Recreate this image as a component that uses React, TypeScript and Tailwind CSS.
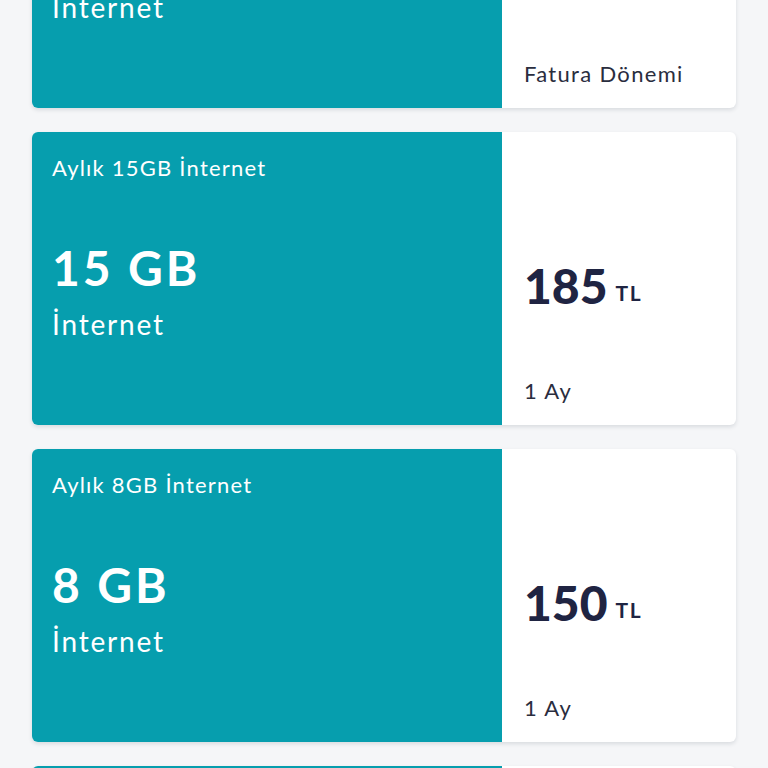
// Internet paketleri — package list cards

interface Pack {
  id: string;
  title: string;
  amount: string;
  price: string;
  period: string;
}

const packs: Pack[] = [
  { id: 'p20', title: 'Aylık 20GB İnternet', amount: '20 GB', price: '210', period: 'Fatura Dönemi' },
  { id: 'p15', title: 'Aylık 15GB İnternet', amount: '15 GB', price: '185', period: '1 Ay' },
  { id: 'p8', title: 'Aylık 8GB İnternet', amount: '8 GB', price: '150', period: '1 Ay' },
  { id: 'p4', title: 'Aylık 4GB İnternet', amount: '4 GB', price: '110', period: '1 Ay' },
];

function PackCard({ pack }: { pack: Pack }) {
  return (
    <div className="flex h-[293px] overflow-hidden rounded-md bg-white shadow-[0_2px_4px_rgba(20,30,50,0.12)]">
      {/* Left: package info */}
      <div className="flex w-[470px] flex-col bg-[#069eae] pl-5 text-white">
        <p className="mt-[25px] text-[22px] leading-none tracking-[0.055em]">{pack.title}</p>
        <p className="mt-[65px] text-[48px] font-bold leading-none tracking-[0.06em]">{pack.amount}</p>
        <p className="mt-[18px] text-[28px] leading-none tracking-[0.065em]">İnternet</p>
      </div>

      {/* Right: price */}
      <div className="flex flex-1 flex-col justify-between pb-[23px] pl-[22px] pt-[130px] text-[#1f2442]">
        <p className="leading-none">
          <span className="text-[48px] font-black">{pack.price}</span>
          <span className="ml-2 align-[3px] text-[21px] font-bold tracking-[0.08em]">TL</span>
        </p>
        <p className="text-[22px] leading-none tracking-[0.06em] text-[#2a2d3e]">{pack.period}</p>
      </div>
    </div>
  );
}

export default function App() {
  return (
    <div className="h-[768px] overflow-hidden bg-[#f5f6f8] font-['Lato',sans-serif]">
      <div className="-mt-[185px] flex flex-col gap-6 px-8">
        {packs.map((pack) => (
          <PackCard key={pack.id} pack={pack} />
        ))}
      </div>
    </div>
  );
}
